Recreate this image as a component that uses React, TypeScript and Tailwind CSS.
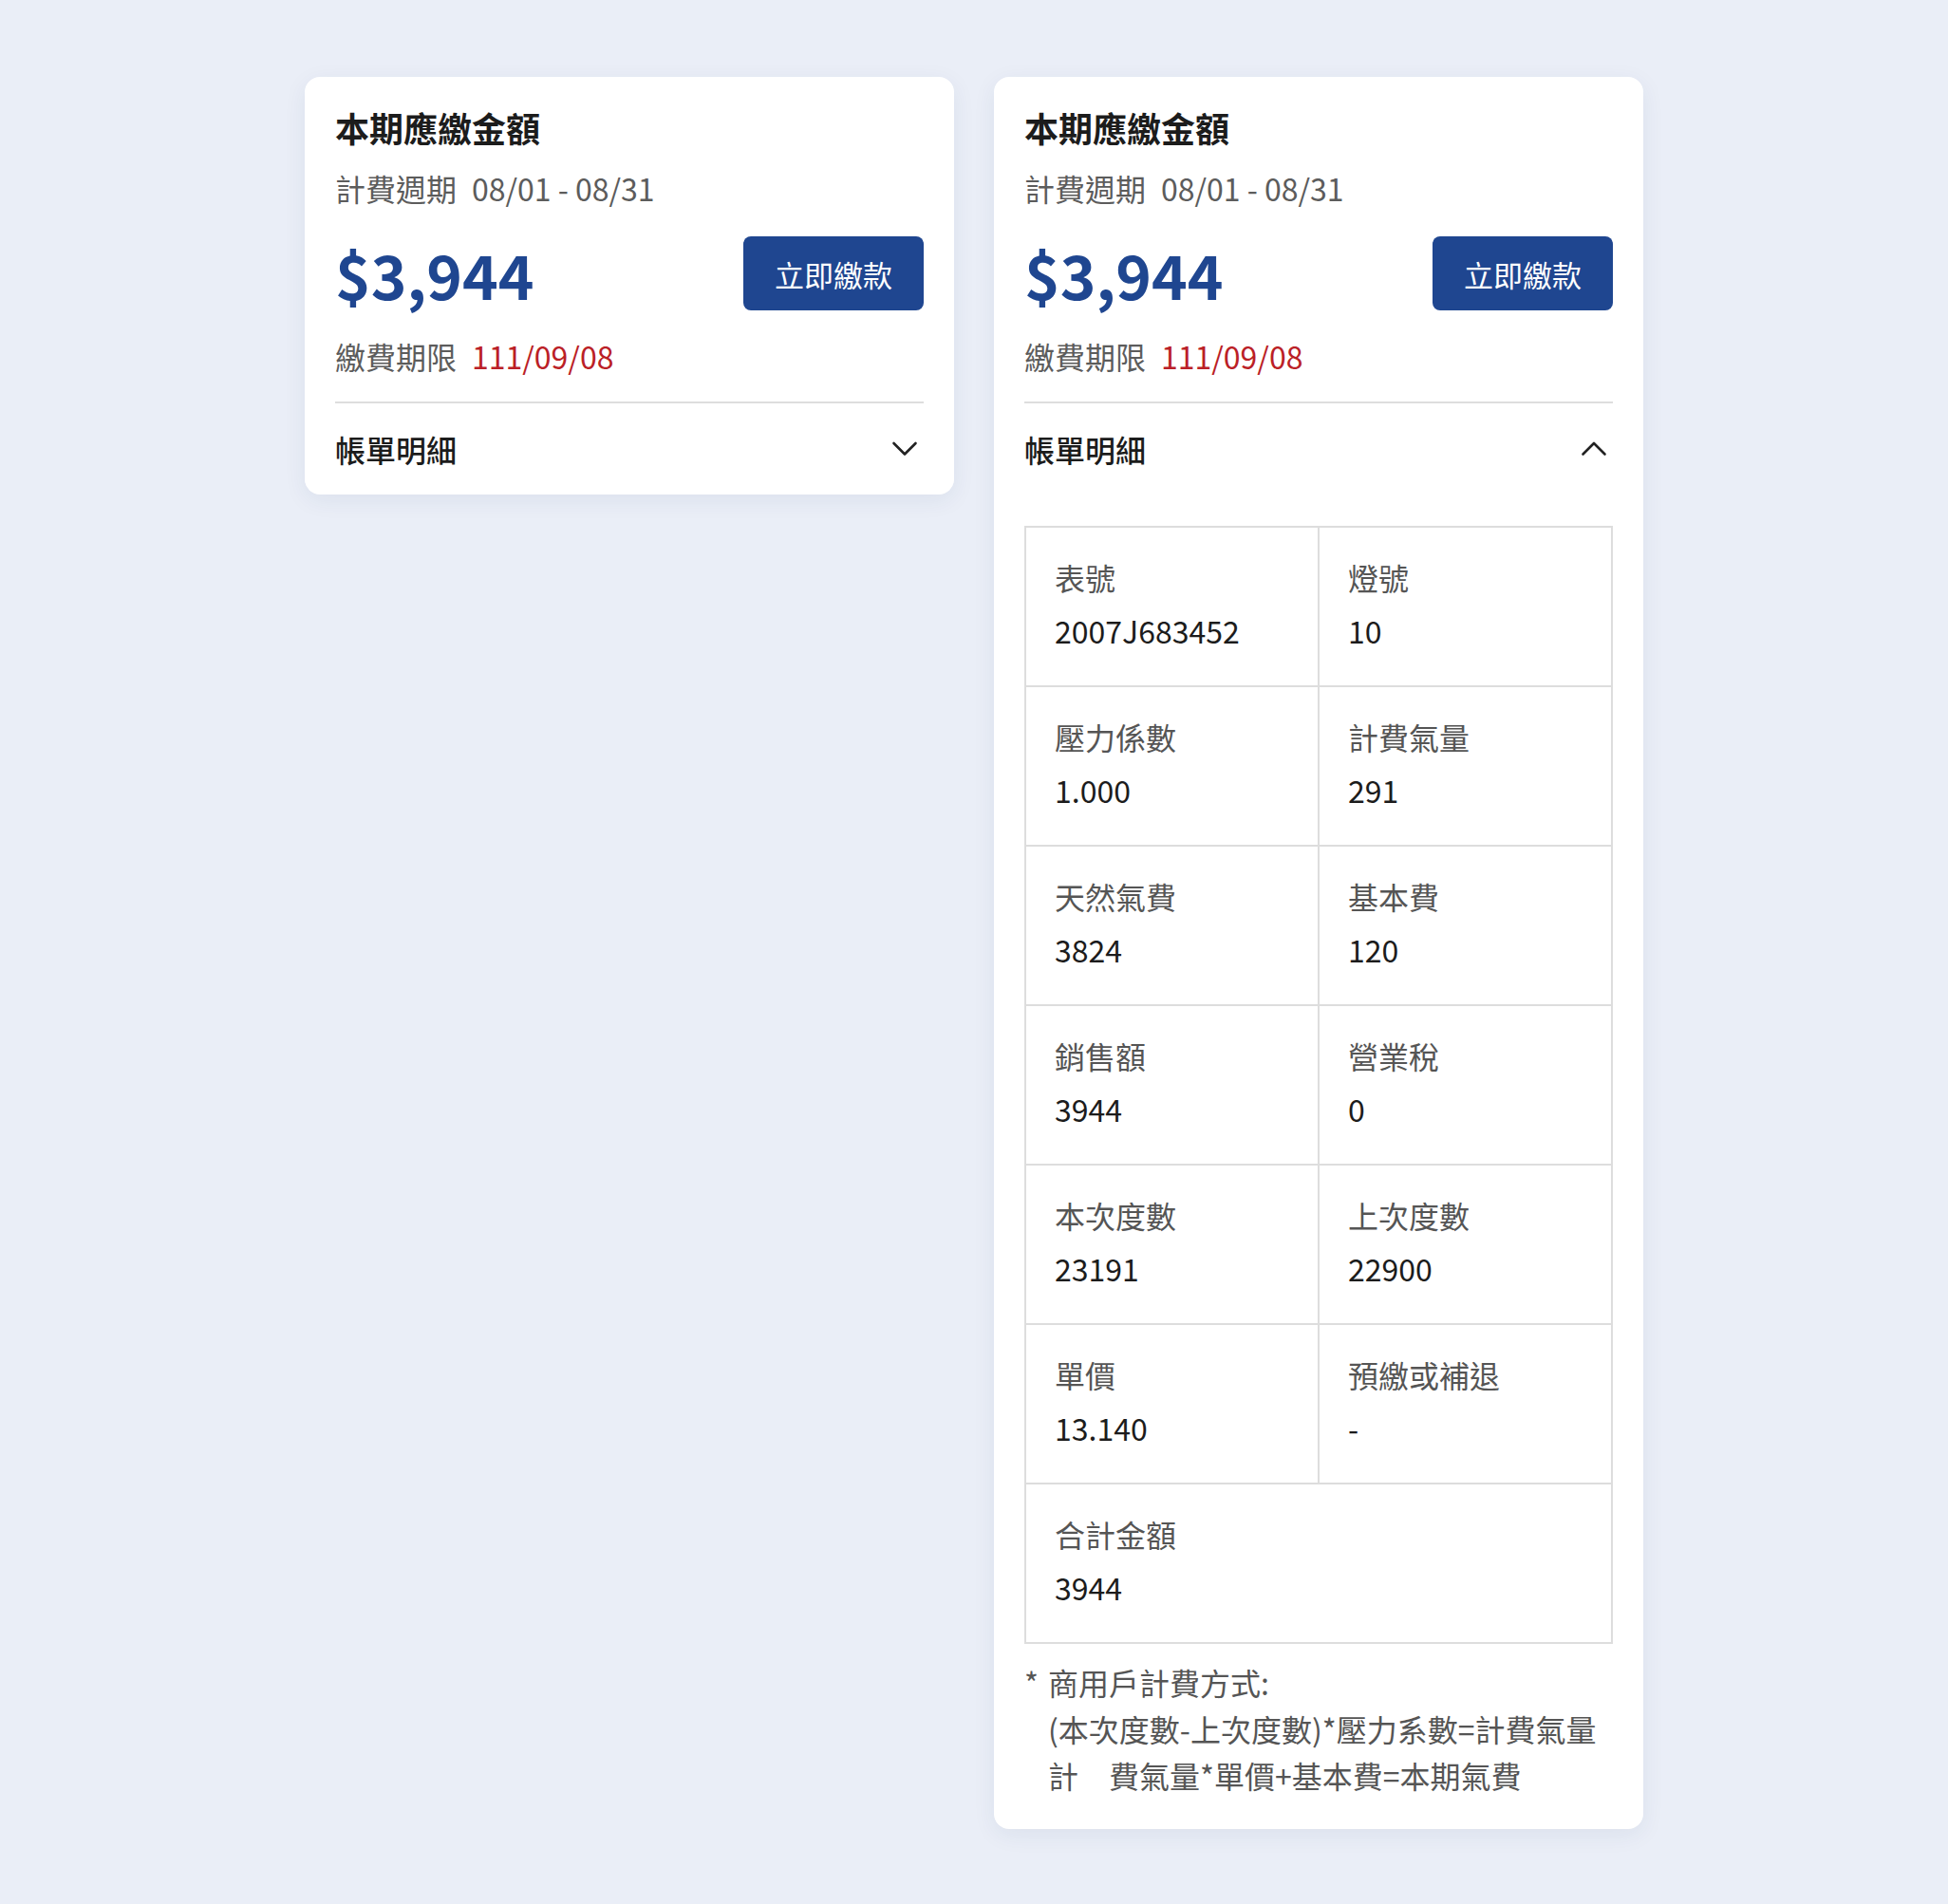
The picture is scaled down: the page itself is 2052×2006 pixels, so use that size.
import React from "react";

type Item = { label: string; value: string; wide?: boolean };

const items: Item[] = [
  { label: "表號", value: "2007J683452" },
  { label: "燈號", value: "10" },
  { label: "壓力係數", value: "1.000" },
  { label: "計費氣量", value: "291" },
  { label: "天然氣費", value: "3824" },
  { label: "基本費", value: "120" },
  { label: "銷售額", value: "3944" },
  { label: "營業稅", value: "0" },
  { label: "本次度數", value: "23191" },
  { label: "上次度數", value: "22900" },
  { label: "單價", value: "13.140" },
  { label: "預繳或補退", value: "-" },
  { label: "合計金額", value: "3944", wide: true },
];

function Chevron({ up }: { up?: boolean }) {
  return (
    <svg width="32" height="32" viewBox="0 0 32 32" fill="none" className="mr-1">
      <polyline
        points={up ? "4.5,21.5 16,10 27.5,21.5" : "4.5,10 16,21.5 27.5,10"}
        stroke="#222222"
        strokeWidth="2.6"
        strokeLinecap="round"
        strokeLinejoin="round"
      />
    </svg>
  );
}

function BillCard({ open }: { open?: boolean }) {
  return (
    <div className="w-[684px] rounded-[16px] bg-white px-8 pt-[29px] shadow-[0_6px_24px_rgba(30,50,100,0.07)]">
      <div className="text-[36px] font-bold leading-[48px] text-[#1c1c1c]">本期應繳金額</div>
      <div className="mt-4 text-[32px] leading-[48px] text-[#5c5c5c]">
        計費週期<span className="ml-4">08/01 - 08/31</span>
      </div>
      <div className="mt-[27px] flex h-[78px] items-center justify-between">
        <div className="text-[64px] font-bold leading-none text-[#1f4690]">$3,944</div>
        <button className="flex h-[78px] w-[190px] items-center justify-center rounded-[8px] bg-[#1f4690] text-[31px] leading-none text-white">
          立即繳款
        </button>
      </div>
      <div className="mt-6 text-[32px] leading-[48px] text-[#5c5c5c]">
        繳費期限<span className="ml-4 text-[#bb1f27]">111/09/08</span>
      </div>
      <div className="mt-6 h-[2px] bg-[#dddddd]" />
      <div className="flex items-center justify-between py-6">
        <span className="text-[32px] font-medium leading-[48px] text-[#1c1c1c]">帳單明細</span>
        <Chevron up={open} />
      </div>
      {open && (
        <div className="pb-8 pt-[33px]">
          <div className="grid grid-cols-2 border-l-2 border-t-2 border-[#dddddd]">
            {items.map((it) => (
              <div
                key={it.label}
                className={`border-b-2 border-r-2 border-[#dddddd] pb-[34px] pl-[30px] pr-8 pt-[28px] ${it.wide ? "col-span-2" : ""}`}
              >
                <div className="text-[32px] leading-[48px] text-[#555555]">{it.label}</div>
                <div className="mt-2 text-[32px] leading-[48px] text-[#1c1c1c]">{it.value}</div>
              </div>
            ))}
          </div>
          <div className="mt-4 flex text-[32px] leading-[49px] text-[#555555]">
            <span className="w-[25px] shrink-0">*</span>
            <div>
              <div>商用戶計費方式:</div>
              <div>(本次度數-上次度數)*壓力系數=計費氣量</div>
              <div>計　費氣量*單價+基本費=本期氣費</div>
            </div>
          </div>
        </div>
      )}
    </div>
  );
}

export default function App() {
  return (
    <div className="min-h-screen bg-[#eaeef7] pt-[81px] font-['Noto_Sans_CJK_TC',sans-serif]">
      <div className="flex items-start justify-center gap-[42px]">
        <BillCard />
        <BillCard open />
      </div>
    </div>
  );
}
